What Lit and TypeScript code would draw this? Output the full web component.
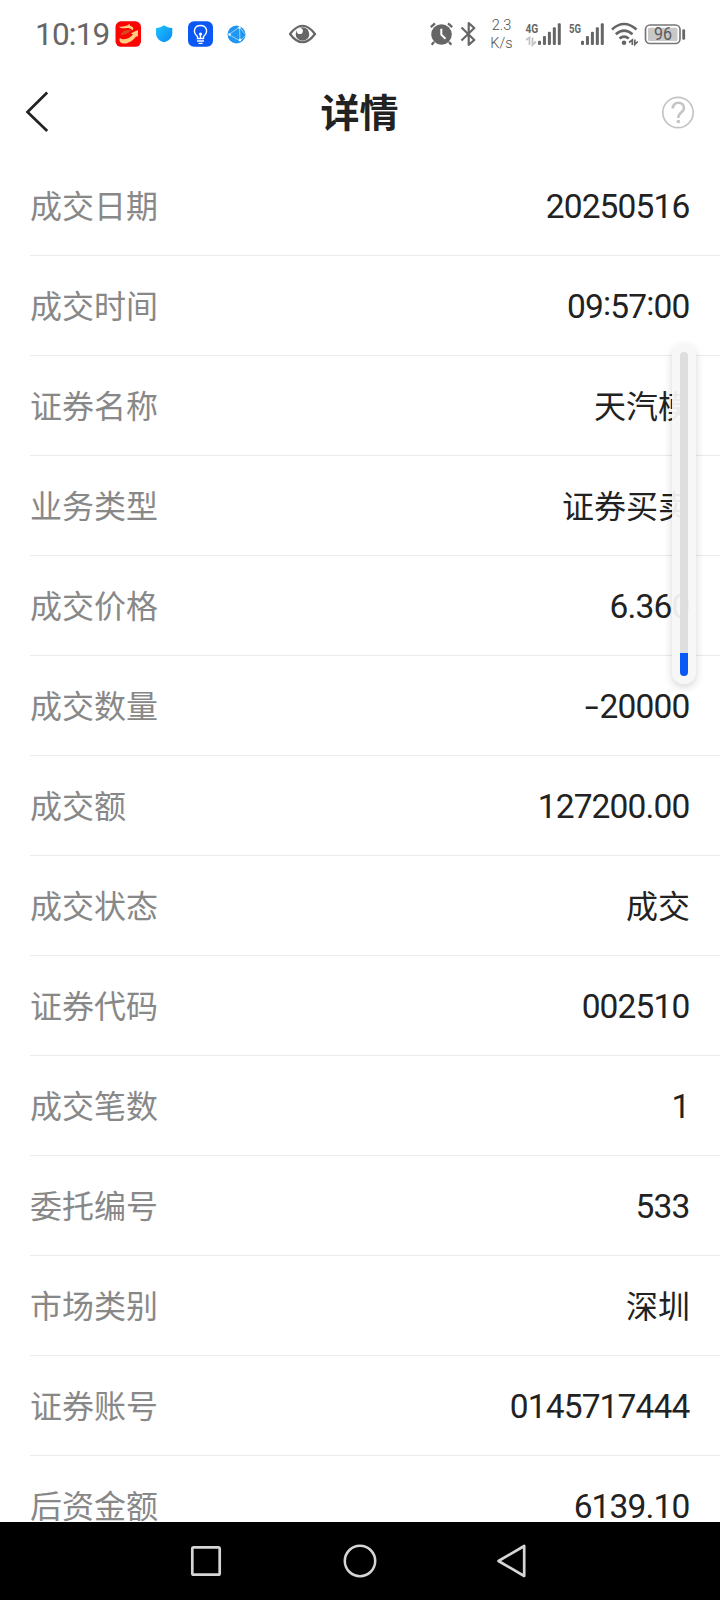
import { LitElement, html, svg, css } from "lit";
import { customElement, property } from "lit/decorators.js";

@customElement("status-bar")
export class StatusBar extends LitElement {
  static styles = css`
    :host {
      display: block;
      height: 68px;
      color: #666;
      font-family: Roboto, "Noto Sans", sans-serif;
    }
    .bar {
      display: flex;
      height: 68px;
      align-items: center;
      padding: 0 34px 0 35px;
      box-sizing: border-box;
    }
    svg { display: block; flex: none; }
    .time { font-size: 31.5px; line-height: 66px; padding-top: 2px; width: 80px; letter-spacing: -0.8px; white-space: nowrap; }
    .shield { margin-left: 15px; }
    .bulb { margin-left: 14.5px; }
    .globe { margin-left: 14px; }
    .eye { margin-left: 43.5px; }
    .alarm { margin-left: auto; margin-right: 6px; }
    .speed {
      width: 32px;
      margin: 0 7.5px 0 8.5px;
      padding-top: 1px;
      text-align: center;
      font-size: 14.5px;
      font-weight: 300;
      line-height: 18px;
      color: #505050;
    }
    .net { font: 700 13px "Roboto", sans-serif; }
    .pct { font: 400 18px "Roboto", sans-serif; }
  `;

  private bars(x: number) {
    return [40.7, 36, 31.7, 27.3, 23.2].map(
      (top, i) => svg`<rect x=${x + i * 4.95} y=${top} width="3" height=${45 - top} rx="1" fill="#666"></rect>`
    );
  }

  render() {
    return html`
      <div class="bar">
        <div class="time">10:19</div>
        <svg width="26" height="26" viewBox="115 21 26 26">
          <rect x="115.500" y="21.300" width="25.500" height="25.500" rx="5.500" fill="#fa0503"></rect>
          <path d="M118.500 26.500C122 27.300 126.500 26.300 129.500 24L130.300 26C133 26.500 134.300 28.500 132.500 30.300C131 28.600 129 28 127 28C123 28.500 121 28.700 118.500 26.500Z" fill="#ffcf80"></path>
          <path d="M121.500 33C124 29.800 128.500 29.300 131.500 30.500C129 32.700 125.500 34.300 121 35.500Z" fill="#d84a20"></path>
          <path d="M120 38C122.500 40.500 128.500 39.500 133 34.500L131 33.300L138 30L137.800 36.800L136.200 36.200C131 43.500 122.500 45.500 120 41.800C119.300 40.600 119.300 39 120 38Z" fill="#ffcf80"></path>
        </svg>
        <svg class="shield" width="17" height="18" viewBox="156 25 17 18">
          <defs><linearGradient id="sh" x1="0" x2="1" y1="0" y2="1"><stop stop-color="#20c4fb"></stop><stop offset="1" stop-color="#0888f4"></stop></linearGradient></defs>
          <path d="M164 25.300C166.200 27 169 27.800 172.300 28V33.500C172.300 38 168.500 41 164 42.300C159.500 41 156 38 156 33.500V28C159 27.800 161.800 27 164 25.300Z" fill="url(#sh)"></path>
        </svg>
        <svg class="bulb" width="25" height="26" viewBox="187.500 21 25 26">
          <rect x="187.500" y="21.300" width="25" height="25.500" rx="6" fill="#0b58f3"></rect>
          <path d="M197 38.500V36.500C191.500 32 194 25.500 200 25.500S208.500 32 203 36.500V38.500Z" fill="none" stroke="#fff" stroke-width="1.400"></path>
          <path d="M196.500 41H203.500M198 43.300H202M200 34V38" stroke="#fff" stroke-width="1.300"></path>
          <circle cx="200" cy="34" r="1.600" fill="#fff"></circle>
        </svg>
        <svg class="globe" width="19" height="19" viewBox="226.500 24.500 19 19">
          <circle cx="236" cy="34" r="9" fill="#2196f0"></circle>
          <path d="M228.500 34L239 26.500L239.500 40.500ZM239 26.500L244 33M239.500 40.500L244 36" fill="none" stroke="#b5e2ff" stroke-width=".8"></path>
          <circle cx="239" cy="27" r="1.200" fill="#fff"></circle><circle cx="239.500" cy="39.500" r="1.200" fill="#fff"></circle><circle cx="229" cy="34" r="1.200" fill="#fff"></circle>
        </svg>
        <svg class="eye" width="28" height="20" viewBox="289 24 28 20">
          <path d="M290 34Q302.500 17.500 315 34Q302.500 50.500 290 34Z" fill="none" stroke="#666" stroke-width="2.200"></path>
          <circle cx="302.500" cy="34" r="6.800" fill="#666"></circle>
          <circle cx="299.800" cy="31" r="3.100" fill="#fff"></circle>
        </svg>

        <svg class="alarm" width="24" height="24" viewBox="430 22 24 24">
          <circle cx="441.500" cy="34.500" r="10.300" fill="#666"></circle>
          <path d="M430.800 27.200L435 23.400M452.200 27.200L448 23.400M434 42L431.700 44.700M449 42L451.300 44.700" stroke="#666" stroke-width="2.300" fill="none"></path>
          <path d="M441.300 28.800V34.600L445.500 38.800" stroke="#fff" stroke-width="2" fill="none"></path>
        </svg>
        <svg width="17" height="26" viewBox="460 21 17 26">
          <path d="M461.500 27.500L474.300 40L468.700 44.800V23.200L474.300 28L461.500 40.500" fill="none" stroke="#666" stroke-width="2.200" stroke-linejoin="round"></path>
        </svg>
        <div class="speed">2.3<br />K/s</div>
        <svg width="38" height="26" viewBox="525 21 38 26">
          <text class="net" x="525.500" y="32.900" textLength="12.800" lengthAdjust="spacingAndGlyphs" fill="#666">4G</text>
          <path d="M526 40L529.500 37.500V45M532.500 37.500V45L536 41.500" fill="none" stroke="#c4c4c4" stroke-width="1.800"></path>
          ${this.bars(538)}
        </svg>
        <svg width="43" height="26" viewBox="563 21 43 26">
          <text class="net" x="569" y="32.900" textLength="12" lengthAdjust="spacingAndGlyphs" fill="#666">5G</text>
          ${this.bars(581)}
        </svg>
        <svg width="38" height="26" viewBox="606 21 38 26">
          <path d="M612 29.500Q624 18.500 636.500 29.500M615.800 34.300Q624 27 632.500 34.300M619.500 38.600Q624 34.800 628.800 38.600" fill="none" stroke="#666" stroke-width="2.600"></path>
          <circle cx="624" cy="42.700" r="2.300" fill="#666"></circle>
          <path d="M629 42.500L632.300 40V45M634.800 39.500V44.500L637.800 41.500" fill="none" stroke="#666" stroke-width="1.700"></path>
        </svg>
        <svg width="42" height="22" viewBox="644 23 42 22">
          <rect x="645.500" y="25" width="34.500" height="18.500" rx="4.500" fill="#fff" stroke="#777" stroke-width="1.700"></rect>
          <rect x="648" y="27.700" width="29.500" height="13.200" rx="1.500" fill="#c8c8c8"></rect>
          <rect x="682.300" y="29.300" width="2.800" height="10.500" rx="1.200" fill="#666"></rect>
          <text class="pct" x="663" y="40.400" text-anchor="middle" textLength="18" lengthAdjust="spacingAndGlyphs" fill="#5a5a5a">96</text>
        </svg>
      </div>
    `;
  }
}

@customElement("nav-header")
export class NavHeader extends LitElement {
  static styles = css`
    :host { display: block; height: 88px; }
    .head {
      display: grid;
      grid-template-columns: 60px 1fr 60px;
      align-items: center;
      height: 88px;
      padding: 0 25px;
      box-sizing: border-box;
    }
    svg { display: block; }
    h1 {
      margin: 0;
      padding: 0 1px 4px 0;
      text-align: center;
      font: 700 39px/60px "Noto Sans CJK SC", sans-serif;
      color: #222;
    }
    .help { justify-self: end; }
  `;
  render() {
    return html`
      <div class="head">
        <svg width="26" height="44" viewBox="25 90 26 44">
          <path d="M47.200 92.500L27.500 112L47.200 131" fill="none" stroke="#222" stroke-width="2.700"></path>
        </svg>
        <h1>详情</h1>
        <svg class="help" width="33" height="33" viewBox="662 95.500 33 33">
          <circle cx="678" cy="112" r="15.200" fill="none" stroke="#c4c4c4" stroke-width="1.700"></circle>
          <path d="M672.800 108C672.500 100.500 684 100.500 684 107.500C684 112 678.300 111.500 678.300 117.500" fill="none" stroke="#c4c4c4" stroke-width="2.600"></path>
          <rect x="676.700" y="119.600" width="3.200" height="3" fill="#c4c4c4"></rect>
        </svg>
      </div>
    `;
  }
}

@customElement("detail-row")
export class DetailRow extends LitElement {
  @property() label = "";
  @property() value = "";

  static styles = css`
    :host {
      display: flex;
      justify-content: space-between;
      align-items: center;
      flex: none;
      height: 100px;
      margin-left: 30px;
      padding-right: 30px;
      box-sizing: border-box;
      border-bottom: 1px solid #ebebeb;
      font: 400 32px/32px "Noto Sans CJK SC", sans-serif;
      white-space: nowrap;
    }
    .label { color: #888; padding-bottom: 4px; }
    .value { color: #222; padding-bottom: 4px; }
    .value.number {
      font-family: Roboto, sans-serif;
      font-size: 33.5px;
      letter-spacing: -0.85px;
      margin-right: 0.5px;
      padding: 3px 0 0;
    }
    .colon { vertical-align: 3px; line-height: 0; }
    .minus {
      display: inline-block;
      transform: scaleX(1.5);
      transform-origin: right center;
      margin-right: 2px;
    }
  `;
  render() {
    const numeric = /^[-\d:.]+$/.test(this.value);
    const parts = this.value.split(/([-:])/).filter((p) => p);
    const pieces = parts.map((p) =>
      p === ":" ? html`<span class="colon">:</span>` : p === "-" ? html`<span class="minus">-</span>` : p
    );
    return html`<span class="label">${this.label}</span
      ><span class="value ${numeric ? "number" : ""}">${pieces}</span>`;
  }
}

@customElement("scroll-gauge")
export class ScrollGauge extends LitElement {
  static styles = css`
    :host {
      display: block;
      width: 24px;
      height: 340px;
      padding: 8px;
      box-sizing: border-box;
      border-radius: 12px;
      background: rgba(247, 247, 247, 0.94);
      box-shadow: 0 3px 9px rgba(0, 0, 0, 0.17);
    }
    .track {
      display: flex;
      flex-direction: column;
      justify-content: flex-end;
      height: 324px;
      border-radius: 4px;
      overflow: hidden;
      background: rgba(220, 220, 220, 0.95);
    }
    .thumb { height: 23px; background: #0a59f7; }
  `;
  render() {
    return html`<div class="track"><div class="thumb"></div></div>`;
  }
}

@customElement("app-root")
export class AppRoot extends LitElement {
  static styles = css`
    :host {
      position: relative;
      display: flex;
      flex-direction: column;
      width: 720px;
      height: 1600px;
      overflow: hidden;
      background: #fff;
    }
    .list { display: flex; flex-direction: column; height: 1366px; overflow: hidden; }
    .gauge { position: absolute; left: 672px; top: 344px; }
    .nav {
      display: flex;
      align-items: center;
      justify-content: center;
      gap: 118px;
      height: 78px;
      padding-right: 1px;
      box-sizing: border-box;
      background: #000;
    }
    svg { display: block; }
  `;

  private rows: [string, string][] = [
    ["成交日期", "20250516"],
    ["成交时间", "09:57:00"],
    ["证券名称", "天汽模"],
    ["业务类型", "证券买卖"],
    ["成交价格", "6.360"],
    ["成交数量", "-20000"],
    ["成交额", "127200.00"],
    ["成交状态", "成交"],
    ["证券代码", "002510"],
    ["成交笔数", "1"],
    ["委托编号", "533"],
    ["市场类别", "深圳"],
    ["证券账号", "0145717444"],
    ["后资金额", "6139.10"],
  ];

  render() {
    return html`
      <status-bar></status-bar>
      <nav-header></nav-header>
      <div class="list">
        ${this.rows.map(([l, v]) => html`<detail-row .label=${l} .value=${v}></detail-row>`)}
      </div>
      <div class="nav">
        <svg width="36" height="36" viewBox="188 1543 36 36">
          <rect x="192.300" y="1547.300" width="27.400" height="27.400" rx="1.500" fill="none" stroke="#d6d6d6" stroke-width="2.700"></rect>
        </svg>
        <svg width="36" height="36" viewBox="342 1543 36 36">
          <circle cx="360" cy="1561" r="15.200" fill="none" stroke="#d6d6d6" stroke-width="2.500"></circle>
        </svg>
        <svg width="36" height="36" viewBox="496.500 1543 36 36">
          <path d="M499 1561L524.700 1546V1576Z" fill="none" stroke="#d6d6d6" stroke-width="2.700" stroke-linejoin="round"></path>
        </svg>
      </div>
      <scroll-gauge class="gauge"></scroll-gauge>
    `;
  }
}
